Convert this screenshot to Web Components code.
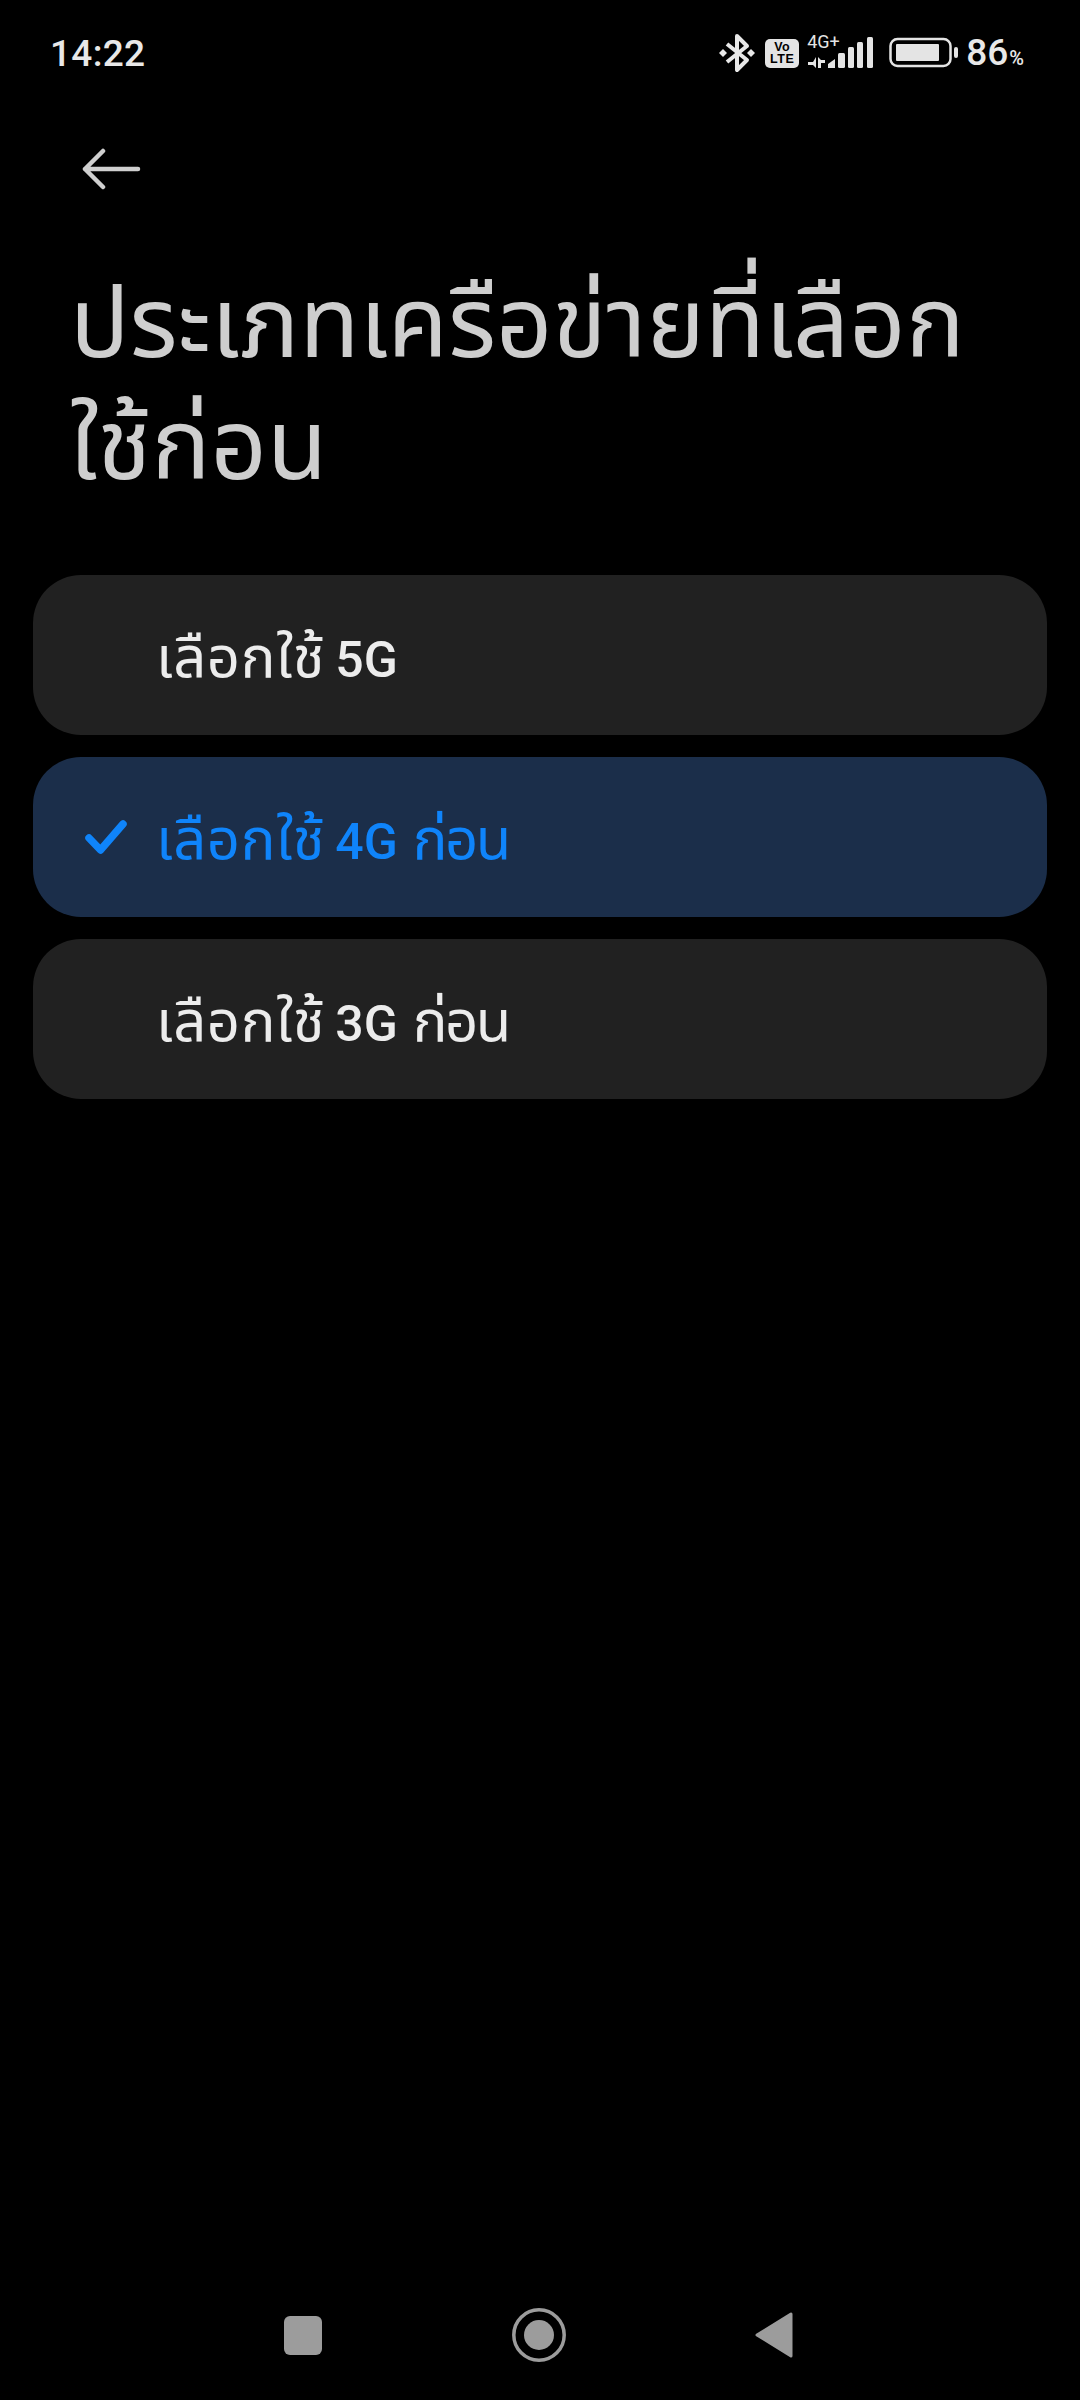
<!DOCTYPE html>
<html><head><meta charset="utf-8"><style>
html,body{margin:0;background:#000}
body{width:1080px;height:2400px;overflow:hidden;font-family:Roboto,"Noto Sans Thai","Noto Sans","DejaVu Sans",sans-serif}
</style></head><body>
<settings-screen>
<status-bar slot="status"></status-bar>
<back-button slot="back"></back-button>
<page-title slot="title">ประเภทเครือข่ายที่เลือกใช้ก่อน</page-title>
<option-row>เลือกใช้ <b>5G</b></option-row>
<option-row selected>เลือกใช้ <b>4G</b> <i>ก่อน</i></option-row>
<option-row>เลือกใช้ <b>3G</b> <i>ก่อน</i></option-row>
<nav-bar slot="nav"></nav-bar>
</settings-screen>
<script>
function def(name,html){customElements.define(name,class extends HTMLElement{constructor(){super();this.attachShadow({mode:'open'}).innerHTML=html}})}
def('settings-screen',`<style>:host{display:flex;flex-direction:column;height:2400px;box-sizing:border-box}
.list{display:flex;flex-direction:column;gap:22px;padding:0 33px;margin-top:68px}
.spacer{flex:1}</style>
<slot name="status"></slot><slot name="back"></slot><slot name="title"></slot>
<div class="list"><slot></slot></div><div class="spacer"></div><slot name="nav"></slot>`);
def('status-bar',`<style>:host{display:flex;align-items:center;justify-content:space-between;height:54px;margin-top:26px;padding:0 56px 0 50px;color:#e8e8e8;font-family:Roboto,sans-serif}
.time{font-size:37px;line-height:54px;letter-spacing:.3px;font-weight:500;padding-top:1px}
.r{display:flex;align-items:center}
.lte{width:34px;height:29px;border-radius:5px;background:#e4e4e4;color:#000;font:700 12.5px/12.5px "Liberation Sans",sans-serif;text-align:center;margin-left:10px;letter-spacing:.5px;padding-top:2px;box-sizing:border-box}
.sig{position:relative;width:68px;height:32px;margin-left:8px;display:block}
.sig span{position:absolute;left:0;top:-4px;font-size:18px;line-height:18px;color:#e4e4e4}
.pct{font-size:37px;line-height:54px;margin-left:7px;font-weight:500;padding-top:5px}.pct small{font-size:20px;margin-left:1px}
svg{display:block}</style>
<span class="time">14:22</span><div class="r">
<svg width="36" height="40" viewBox="0 0 36 40" fill="none" stroke="#e8e8e8" stroke-width="4" stroke-linejoin="round"><path d="M8 11 28 27 18 37V3L28 13 8 29"/><g fill="#e8e8e8" stroke="none"><path d="M0 20l4-4 4 4-4 4z"/><path d="M28 20l4-4 4 4-4 4z"/></g></svg>
<div class="lte">Vo<br>LTE</div>
<div class="sig"><span>4G+</span><svg width="68" height="32" viewBox="0 0 68 32" fill="#e4e4e4"><path d="M9 20v11l-3-3H1v-3h5zM11 20l3 3h4v3h-4v5h-3z"/><path d="M21 27l7-5v9h-7z"/><rect x="31" y="16" width="7" height="15" rx="1.500"/><rect x="41" y="10" width="6" height="21" rx="1.500"/><rect x="50" y="5" width="6" height="26" rx="1.500"/><rect x="60" y="0" width="6" height="31" rx="1.500"/></svg></div>
<svg width="70" height="32" viewBox="0 0 70 32" style="margin-left:14px"><rect x="1.500" y="2" width="60" height="27" rx="7" fill="none" stroke="#e4e4e4" stroke-width="2.500"/><rect x="7" y="7" width="43" height="17" rx="1" fill="#e4e4e4"/><rect x="65" y="10" width="4" height="11" rx="2" fill="#e4e4e4"/></svg>
<span class="pct">86<small>%</small></span></div>`);
def('back-button',`<style>:host{display:block;height:44px;margin:67px 0 0 82px}svg{display:block}</style>
<svg width="60" height="44" viewBox="0 0 60 44" fill="none" stroke="#cfcfcf" stroke-width="4.500" stroke-linecap="round" stroke-linejoin="round"><path d="M3 22H56M21 4 3 22 21 40"/></svg>`);
def('page-title',`<style>:host{display:block;margin:72px 70px 0 70px;font-size:98.500px;line-height:122px;color:#cecece}</style><slot></slot>`);
customElements.define('option-row',class extends HTMLElement{constructor(){super();this.attachShadow({mode:'open'}).innerHTML=`<style>
:host{display:flex;align-items:center;height:160px;border-radius:48px;background:#212121;color:#ececec;font-size:58px;line-height:80px;padding:6px 0 0 123px;box-sizing:border-box;position:relative;letter-spacing:.6px}
:host([selected]){background:#1b2e4a;color:#0f84fa}
svg{position:absolute;left:52px;top:62px;display:none}:host([selected]) svg{display:block}
::slotted(b){font-weight:500;font-size:50px;margin-left:-5px;letter-spacing:0}
::slotted(i){font-style:normal;letter-spacing:-2.500px}</style>
<svg width="42" height="36" viewBox="0 0 42 36" fill="none" stroke="#0f84fa" stroke-width="7.500" stroke-linecap="round" stroke-linejoin="round"><path d="M4 19 15.500 31 38 5"/></svg><span><slot></slot></span>`}});
def('nav-bar',`<style>:host{display:flex;height:54px;margin-bottom:38px;padding-right:3px;justify-content:center;align-items:center}svg{display:block;flex:none}
.a{width:38px}.b{width:54px;margin-left:190px}.c{width:38px;margin-left:189px}</style>
<svg class="a" height="39" viewBox="0 0 38 39"><rect width="38" height="39" rx="6" fill="#9c9c9c"/></svg>
<svg class="b" height="54" viewBox="0 0 54 54"><circle cx="27" cy="27" r="25.200" fill="none" stroke="#9c9c9c" stroke-width="3.500"/><circle cx="27" cy="27" r="15" fill="#9c9c9c"/></svg>
<svg class="c" height="46" viewBox="0 0 38 46"><path d="M36 2V44L2 23Z" fill="#9c9c9c" stroke="#9c9c9c" stroke-width="3" stroke-linejoin="round"/></svg>`);
</script></body></html>
